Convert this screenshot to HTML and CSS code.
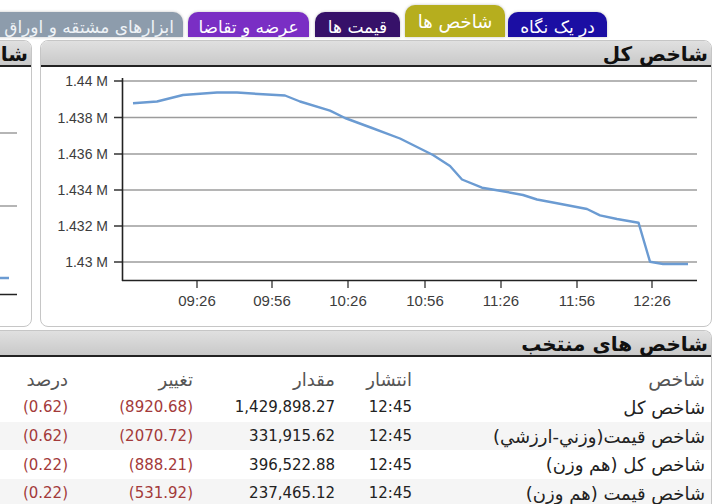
FILE: index.html
```html
<!DOCTYPE html>
<html lang="fa">
<head>
<meta charset="utf-8">
<title>شاخص ها</title>
<link rel="stylesheet" href="styles.css">
</head>
<body>
<div class="page">
  <nav class="tabs">
    <div class="tab t1">در یک نگاه</div>
    <div class="tab t2">شاخص ها</div>
    <div class="tab t3">قیمت ها</div>
    <div class="tab t4">عرضه و تقاضا</div>
    <div class="tab t5">ابزارهای مشتقه و اوراق بهادار</div>
  </nav>

  <div class="panels">
    <section class="panel main">
      <div class="band"><h2>شاخص کل</h2></div>
      <svg class="chart" width="670" height="259" viewBox="41 67 670 259">
        <g stroke="#9c9c9c" stroke-width="1.3">
          <line x1="122" y1="81" x2="697" y2="81"/>
          <line x1="122" y1="117.5" x2="697" y2="117.5"/>
          <line x1="122" y1="154" x2="697" y2="154"/>
          <line x1="122" y1="190" x2="697" y2="190"/>
          <line x1="122" y1="226" x2="697" y2="226"/>
          <line x1="122" y1="262" x2="697" y2="262"/>
        </g>
        <g stroke="#333" stroke-width="1.3">
          <line x1="114" y1="81" x2="122" y2="81"/>
          <line x1="114" y1="117.5" x2="122" y2="117.5"/>
          <line x1="114" y1="154" x2="122" y2="154"/>
          <line x1="114" y1="190" x2="122" y2="190"/>
          <line x1="114" y1="226" x2="122" y2="226"/>
          <line x1="114" y1="262" x2="122" y2="262"/>
          <line x1="197" y1="280" x2="197" y2="288"/>
          <line x1="272" y1="280" x2="272" y2="288"/>
          <line x1="348" y1="280" x2="348" y2="288"/>
          <line x1="425" y1="280" x2="425" y2="288"/>
          <line x1="501" y1="280" x2="501" y2="288"/>
          <line x1="577" y1="280" x2="577" y2="288"/>
          <line x1="652" y1="280" x2="652" y2="288"/>
        </g>
        <g stroke="#222" stroke-width="1.6">
          <line x1="122.5" y1="78" x2="122.5" y2="281"/>
          <line x1="122" y1="280.5" x2="697" y2="280.5"/>
        </g>
        <g class="ylab" text-anchor="end">
          <text x="108" y="86">1.44 M</text>
          <text x="108" y="122.5">1.438 M</text>
          <text x="108" y="159">1.436 M</text>
          <text x="108" y="195">1.434 M</text>
          <text x="108" y="231">1.432 M</text>
          <text x="108" y="267">1.43 M</text>
        </g>
        <g class="xlab" text-anchor="middle">
          <text x="197" y="306">09:26</text>
          <text x="272" y="306">09:56</text>
          <text x="348" y="306">10:26</text>
          <text x="425" y="306">10:56</text>
          <text x="501" y="306">11:26</text>
          <text x="577" y="306">11:56</text>
          <text x="652" y="306">12:26</text>
        </g>
        <polyline fill="none" stroke="#6b9bd2" stroke-width="2.4" stroke-linejoin="round"
          points="133,103.3 157,101.5 183,95 217,92.5 237,92.5 263,94.3 285,95.5 300,101.5 330,110.7 345,118 372,128 400,138.5 433,155 450,166 462,179.5 482,187.7 500,190.7 523,195 537,199.5 557,203.3 587,209 600,215.3 617,219 638.5,222.7 650,261.7 663,264 688,264"/>
      </svg>
    </section>

    <section class="panel side">
      <div class="band"><h2>شاخص کل هم وزن</h2></div>
      <svg class="chart" width="190" height="259" viewBox="-159 67 190 259">
        <g stroke="#9c9c9c" stroke-width="1.3">
          <line x1="-159" y1="133" x2="17" y2="133"/>
          <line x1="-159" y1="206" x2="17" y2="206"/>
        </g>
        <line x1="-159" y1="278" x2="9" y2="278" stroke="#6b9bd2" stroke-width="2.4"/>
        <line x1="-159" y1="294.5" x2="17" y2="294.5" stroke="#222" stroke-width="1.6"/>
      </svg>
    </section>
  </div>

  <section class="selected">
    <div class="band"><h2>شاخص های منتخب</h2></div>
    <div class="table">
      <div class="row head">
        <div>شاخص</div><div>انتشار</div><div>مقدار</div><div>تغییر</div><div>درصد</div>
      </div>
      <div class="row">
        <div class="name">شاخص کل</div><div class="num">12:45</div><div class="num">1,429,898.27</div><div class="num neg">(8920.68)</div><div class="num neg">(0.62)</div>
      </div>
      <div class="row alt">
        <div class="name">شاخص قیمت(وزني-ارزشي)</div><div class="num">12:45</div><div class="num">331,915.62</div><div class="num neg">(2070.72)</div><div class="num neg">(0.62)</div>
      </div>
      <div class="row">
        <div class="name">شاخص کل (هم وزن)</div><div class="num">12:45</div><div class="num">396,522.88</div><div class="num neg">(888.21)</div><div class="num neg">(0.22)</div>
      </div>
      <div class="row alt">
        <div class="name">شاخص قیمت (هم وزن)</div><div class="num">12:45</div><div class="num">237,465.12</div><div class="num neg">(531.92)</div><div class="num neg">(0.22)</div>
      </div>
    </div>
  </section>
</div>
</body>
</html>
```

FILE: styles.css
```css
html, body {
  margin: 0;
  padding: 0;
  overflow: hidden;
  background: #fff;
}

body {
  font-family: "DejaVu Sans", "Noto Sans", sans-serif;
}

.page {
  width: 900px;
  margin-left: -188px;
  direction: rtl;
}

/* Tabs */
.tabs {
  display: flex;
  align-items: flex-end;
  height: 37px;
  padding-right: 105px;
}

.tab {
  flex: none;
  box-sizing: border-box;
  height: 25px;
  border-radius: 10px 10px 0 0;
  color: #fff;
  font-size: 17px;
  line-height: 30px;
  text-align: center;
  white-space: nowrap;
  overflow: hidden;
  box-shadow: 0 0 3px rgba(0, 0, 0, 0.25);
}

.t1 { width: 99px; background: #1b0ea3; }
.t2 { width: 100px; height: 32px; margin-right: 3px; background: #b6ae1e; line-height: 34px; font-size: 18px; }
.t3 { width: 85px; margin-right: 5px; background: #361169; }
.t4 { width: 121px; margin-right: 6px; background: #7a2ec4; }
.t5 { width: 320px; margin-right: 5px; background: #8d9cac; color: #eef2f6; text-align: right; padding-right: 9px; }

/* Panels */
.panels {
  display: flex;
  gap: 8px;
  margin-top: 3px;
  height: 287px;
}

.panel {
  flex: none;
  box-sizing: border-box;
  border: 1px solid #c6c6c6;
  border-radius: 8px;
  overflow: hidden;
  background: #fff;
}

.main { width: 672px; }
.side { width: 192px; }

.band {
  height: 24px;
  background: linear-gradient(#e0e0e0, #c9c9c9);
  border-bottom: 2px solid #222;
  display: flex;
  align-items: flex-end;
  padding-right: 3px;
}

.band h2 {
  margin: 0;
  font-size: 20px;
  font-weight: bold;
  line-height: 22px;
  color: #111;
  white-space: nowrap;
}

.chart {
  display: block;
  direction: ltr;
}

.ylab text {
  font-family: "Liberation Sans", Arial, sans-serif;
  font-size: 14px;
  fill: #3c3c3c;
}

.xlab text {
  font-family: "Liberation Sans", Arial, sans-serif;
  font-size: 15px;
  fill: #3c3c3c;
}

/* Selected indices */
.selected {
  margin-top: 3px;
  border-top: 1px solid #c6c6c6;
  border-right: 1px solid #c6c6c6;
  border-top-right-radius: 8px;
  overflow: hidden;
}

.table {
  padding-top: 8px;
}

.row {
  display: grid;
  grid-template-columns: 6px 293px 77px 142px 125px 1fr;
  align-items: center;
  height: 28.7px;
  font-size: 15px;
  color: #222;
}

.row > div:first-child { grid-column: 2; }

.row.head {
  height: 28px;
  font-size: 19px;
  color: #555;
}

.row.head > div:nth-child(n+2) { font-size: 18px; }

.name { font-size: 18px; }

.row.alt { background: #f5f5f5; }

.num {
  direction: ltr;
  text-align: right;
  font-size: 15px;
}

.neg { color: #a33a3a; }
```
